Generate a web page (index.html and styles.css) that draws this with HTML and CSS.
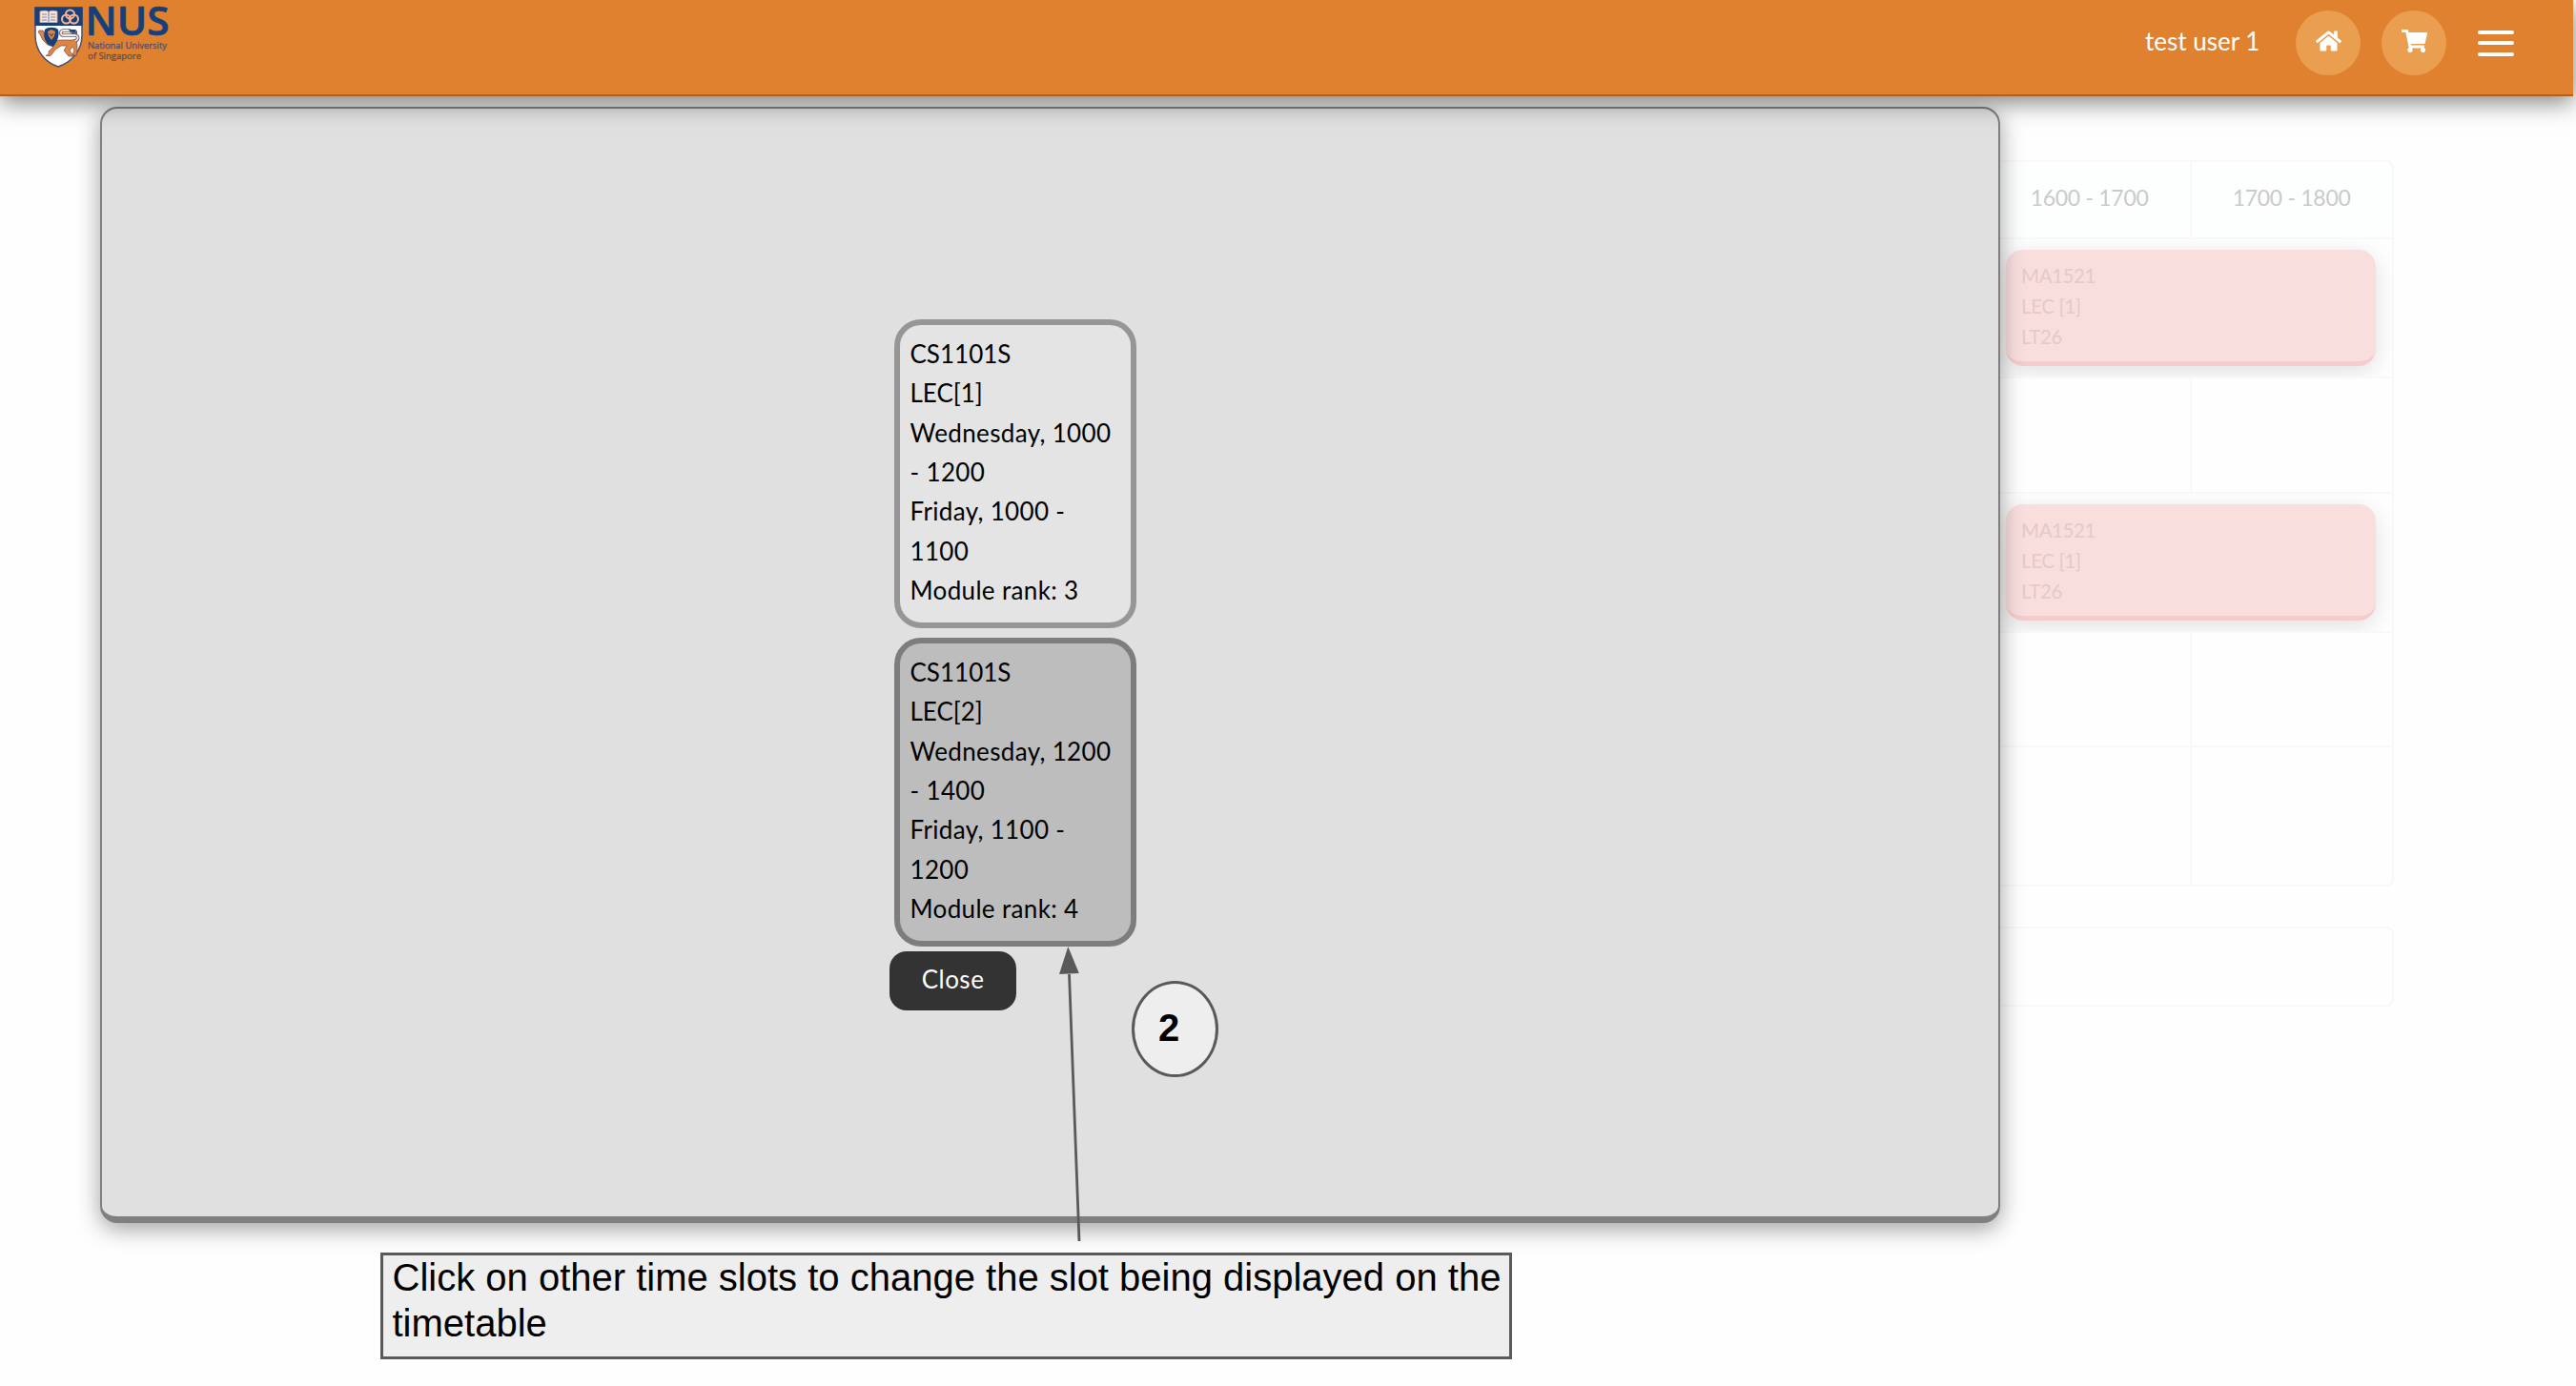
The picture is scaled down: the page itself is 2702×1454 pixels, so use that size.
FILE: index.html
```html
<!DOCTYPE html>
<html lang="en">
<head>
<meta charset="utf-8">
<title>NUS Timetable</title>
<link rel="stylesheet" href="styles.css">
</head>
<body>
<header class="topbar">
  <a class="brand">
    <svg class="crest" width="52" height="66" viewBox="0 0 52 66">
      <path d="M1 1H50V30C50 48 37 59 25 63C13 59 1 48 1 30Z" fill="#fff" stroke="#4a5272" stroke-width="1.500"/>
      <path d="M0.500 0.500H50.500V20H0.500Z" fill="#173f7a"/>
      <path d="M6 5C10 4 13 4 15 5.500C17 4 20 4 24 5V16.500H6Z" fill="#fbe6dc" stroke="#ef9b6a" stroke-width="1"/>
      <path d="M15 5.500V16M8 8H13M8 11H13M8 14H13M17 8H22M17 11H22M17 14H22" stroke="#7389ad" stroke-width="1.200"/>
      <g fill="none" stroke="#f7b48e" stroke-width="2"><circle cx="37.500" cy="8" r="4.500"/><circle cx="33.500" cy="13" r="4.500"/><circle cx="41.500" cy="13" r="4.500"/></g>
      <path d="M6 25C4 24 4 28 6 29L9 35L14 40L20 42L15 47C16 50 14 50 12 51.500H17L22 45L28 41L34 41L31 46L36 52H41L37 46L40 42L42 45L40 51H44.500L45 41L44 34L40 35H26L17 38L12 32L9 25Z" fill="#e0853f" stroke="#7a4a4a" stroke-width=".7"/>
      <path d="M43 36C46 35 47 31 43 30H30C27 29 27 25 31 25H37L41 27H45" fill="none" stroke="#5b5f7c" stroke-width="3.600"/>
      <path d="M43 36C46 35 47 31 43 30H30C27 29 27 25 31 25H37" fill="none" stroke="#f6e4d8" stroke-width="1.800"/>
      <path d="M35 24L44 24L42 27Z" fill="#173f7a"/>
      <path d="M11 24C14 21 22 21 25 24C27 31 23 38 20 42L15 40C11 37 9 30 11 24Z" fill="#173f7a"/>
      <path d="M14 26L18 24L22 26L21 31L18 35L15 31Z" fill="#d98245"/>
      <path d="M16 28L18 31L20 28" fill="none" stroke="#173f7a"/>
    </svg>
    <svg class="wordmark" width="90" height="70" viewBox="0 0 90 70">
      <text class="brand-name" x="-2.500" y="36.500" textLength="88" lengthAdjust="spacingAndGlyphs">NUS</text>
      <text class="brand-sub" x="0" y="50.500" textLength="83" lengthAdjust="spacingAndGlyphs">National University</text>
      <text class="brand-sub" x="0" y="61.500" textLength="56" lengthAdjust="spacingAndGlyphs">of Singapore</text>
    </svg>
  </a>
  <nav class="nav">
    <span class="user">test user 1</span>
    <a class="round"><svg width="27" height="24" viewBox="0 0 576 512"><path fill="#fff" d="M280.400 148.300L96 300.100V464a16 16 0 0 0 16 16l112-.3a16 16 0 0 0 16-16V368a16 16 0 0 1 16-16h64a16 16 0 0 1 16 16v95.600a16 16 0 0 0 16 16.100L464 480a16 16 0 0 0 16-16V300L295.700 148.300a12.200 12.200 0 0 0-15.300 0zM571.600 251.500L488 182.600V44a12 12 0 0 0-12-12h-56a12 12 0 0 0-12 12v72.600L318.500 43a48 48 0 0 0-61 0L4.300 251.500a12 12 0 0 0-1.600 16.900l25.500 31a12 12 0 0 0 16.900 1.600L280.400 107.200a12.200 12.200 0 0 1 15.300 0L530.900 301a12 12 0 0 0 16.900-1.600l25.500-31a12 12 0 0 0-1.700-16.900z"/></svg></a>
    <a class="round"><svg width="27" height="24" viewBox="0 0 576 512"><path fill="#fff" d="M528.100 301.300l47.300-208C578.800 78.300 567.400 64 552 64H159.200l-9.200-44.800C147.800 8 137.900 0 126.500 0H24C10.700 0 0 10.700 0 24v16c0 13.300 10.700 24 24 24h69.900l70.200 343.400C147.300 417.100 136 435.200 136 456c0 30.900 25.100 56 56 56s56-25.100 56-56c0-15.700-6.400-29.800-16.800-40h209.600C430.400 426.200 424 440.300 424 456c0 30.900 25.100 56 56 56s56-25.100 56-56c0-22.200-12.900-41.300-31.600-50.400l5.500-24.300c3.400-15-8-29.300-23.400-29.300H218.100l-6.500-32h293.100c11.200 0 20.900-7.800 23.400-18.700z"/></svg></a>
    <a class="menu"><i></i><i></i><i></i></a>
  </nav>
</header>

<main class="page">
  <section class="timetable">
    <div class="cell head">1600 - 1700</div><div class="cell head last">1700 - 1800</div>
    <div class="cell wide"><div class="lesson"><span>MA1521</span><span>LEC [1]</span><span>LT26</span></div></div>
    <div class="cell"></div><div class="cell last"></div>
    <div class="cell wide"><div class="lesson"><span>MA1521</span><span>LEC [1]</span><span>LT26</span></div></div>
    <div class="cell"></div><div class="cell last"></div>
    <div class="cell"></div><div class="cell last"></div>
  </section>
  <section class="panel"></section>
</main>

<div class="modal">
  <div class="choices">
    <div class="slot"><span class="code">CS1101S</span><span class="code">LEC[1]</span><span>Wednesday, 1000</span><span>- 1200</span><span>Friday, 1000 -</span><span>1100</span><span>Module rank: 3</span></div>
    <div class="slot picked"><span class="code">CS1101S</span><span class="code">LEC[2]</span><span>Wednesday, 1200</span><span>- 1400</span><span>Friday, 1100 -</span><span>1200</span><span>Module rank: 4</span></div>
    <button class="close">Close</button>
  </div>
</div>

<svg class="arrow" width="40" height="312" viewBox="0 0 40 312"><path d="M21.500 30L32 310" stroke="#595959" stroke-width="2.800"/><path d="M20.300 1L31.800 29L11 30Z" fill="#595959"/></svg>
<div class="step">2</div>
<div class="note">Click on other time slots to change the slot being displayed on the<br>timetable</div>
</body>
</html>
```
FILE: styles.css
```css
* { box-sizing: border-box; }
body {
  margin: 0;
  width: 2702px;
  height: 1454px;
  overflow: hidden;
  position: relative;
  background: #fefefe;
  font-family: Lato, sans-serif;
  font-size: 26px;
}
.topbar {
  position: relative;
  z-index: 3;
  width: 2699px;
  height: 101px;
  display: flex;
  justify-content: space-between;
  align-items: flex-start;
  background: #e0812f;
  border-bottom: 2px solid #ad6020;
  box-shadow: 0 6px 24px rgba(0, 0, 0, .5);
}
.brand { display: flex; align-items: flex-start; padding-left: 36px; gap: 4px; }
.crest { margin-top: 7px; }
.wordmark { overflow: visible; }
.brand-name { font: 600 41px "Open Sans", sans-serif; fill: #173f7a; stroke: #173f7a; stroke-width: .7; }
.brand-sub { font: 400 9.500px "Open Sans", sans-serif; fill: #56506a; stroke: #56506a; stroke-width: .3; }
.nav { display: flex; align-items: center; height: 90px; padding-right: 62px; }
.user { color: #fff; width: 158px; white-space: nowrap; margin-top: -4px; }
.round {
  width: 68px;
  height: 68px;
  margin-right: 22px;
  border-radius: 50%;
  background: #e99e50;
  display: flex;
  align-items: center;
  justify-content: center;
  padding: 0 0 4px 1px;
}
.menu { display: flex; flex-direction: column; gap: 7.500px; width: 38px; margin-left: 11px; }
.menu i { height: 4px; border-radius: 2px; background: #fff; }

.page { padding: 67px 191px 0 0; display: flex; flex-direction: column; align-items: flex-end; gap: 42px; }
.timetable {
  width: 2300px;
  height: 762px;
  display: grid;
  grid-template-columns: 1fr 210px;
  grid-template-rows: 81px 146px 121px 146px 120px 144px;
  border: 2px solid #f8f8f8;
  border-radius: 8px;
  overflow: hidden;
}
.cell { border-right: 2px solid #f8f8f8; border-bottom: 2px solid #f8f8f8; min-width: 0; }
.cell.last { border-right: 0; }
.cell:nth-last-child(-n+2) { border-bottom: 0; }
.head {
  background: #fdfffe;
  color: #cacaca;
  font-size: 23px;
  letter-spacing: -.3px;
  display: flex;
  align-items: center;
  justify-content: flex-end;
  padding: 0 43.500px 6px 0;
}
.cell.wide {
  grid-column: 1 / 3;
  border-right: 0;
  display: flex;
  justify-content: flex-end;
  padding: 11px 17px 0 0;
  overflow: hidden;
}
.lesson {
  width: 388px;
  height: 122px;
  border-radius: 18px;
  border-bottom: 5px solid #f5cccc;
  background: #f9dede;
  box-shadow: 0 6px 24px rgba(0, 0, 0, .12);
  padding: 11px 16px;
  color: #e4caca;
  font-size: 20.500px;
  letter-spacing: -.4px;
  line-height: 32px;
}
.lesson span, .slot span { display: block; white-space: nowrap; }
.panel { width: 2300px; height: 84px; border: 2px solid #f8f8f8; border-radius: 8px; }

.modal {
  position: absolute;
  z-index: 2;
  left: 105px;
  top: 112px;
  width: 1993px;
  height: 1171px;
  border: 2px solid #808080;
  border-bottom-width: 7px;
  border-radius: 18px;
  background: #e0e0e0;
  box-shadow: 0 6px 24px rgba(0, 0, 0, .38);
  padding: 221px 0 0 826px;
}
.choices { display: flex; flex-direction: column; align-items: flex-start; }
.slot {
  width: 254px;
  height: 324px;
  margin: 0 0 10px 5px;
  padding: 10px 10.500px;
  border: 6px solid #969696;
  border-radius: 28px;
  background: #e4e4e4;
  line-height: 41.330px;
  letter-spacing: .34px;
}
.slot .code { letter-spacing: 0; }
.picked { background: #bdbdbd; border-color: #7d7d7d; margin-bottom: 5px; }
.close {
  width: 133px;
  height: 62px;
  border: 0;
  border-radius: 18px;
  background: #333;
  color: #fff;
  font: 26px Lato, sans-serif;
  letter-spacing: .5px;
  padding: 0 0 5px;
}
.arrow { position: absolute; z-index: 4; left: 1100px; top: 992px; }
.step {
  position: absolute;
  z-index: 4;
  left: 1187px;
  top: 1029px;
  width: 91px;
  height: 101px;
  border: 3px solid #595959;
  border-radius: 50%;
  background: #eee;
  font: bold 40px/92px "Liberation Sans", sans-serif;
  padding-left: 25px;
}
.note {
  position: absolute;
  z-index: 4;
  left: 399px;
  top: 1314px;
  width: 1187px;
  height: 112px;
  border: 3px solid #595959;
  background: #eee;
  font: 40px/48px "Liberation Sans", sans-serif;
  padding-left: 9.500px;
  white-space: nowrap;
}
.note::before { content: ""; display: block; margin-top: -1px; }
```
